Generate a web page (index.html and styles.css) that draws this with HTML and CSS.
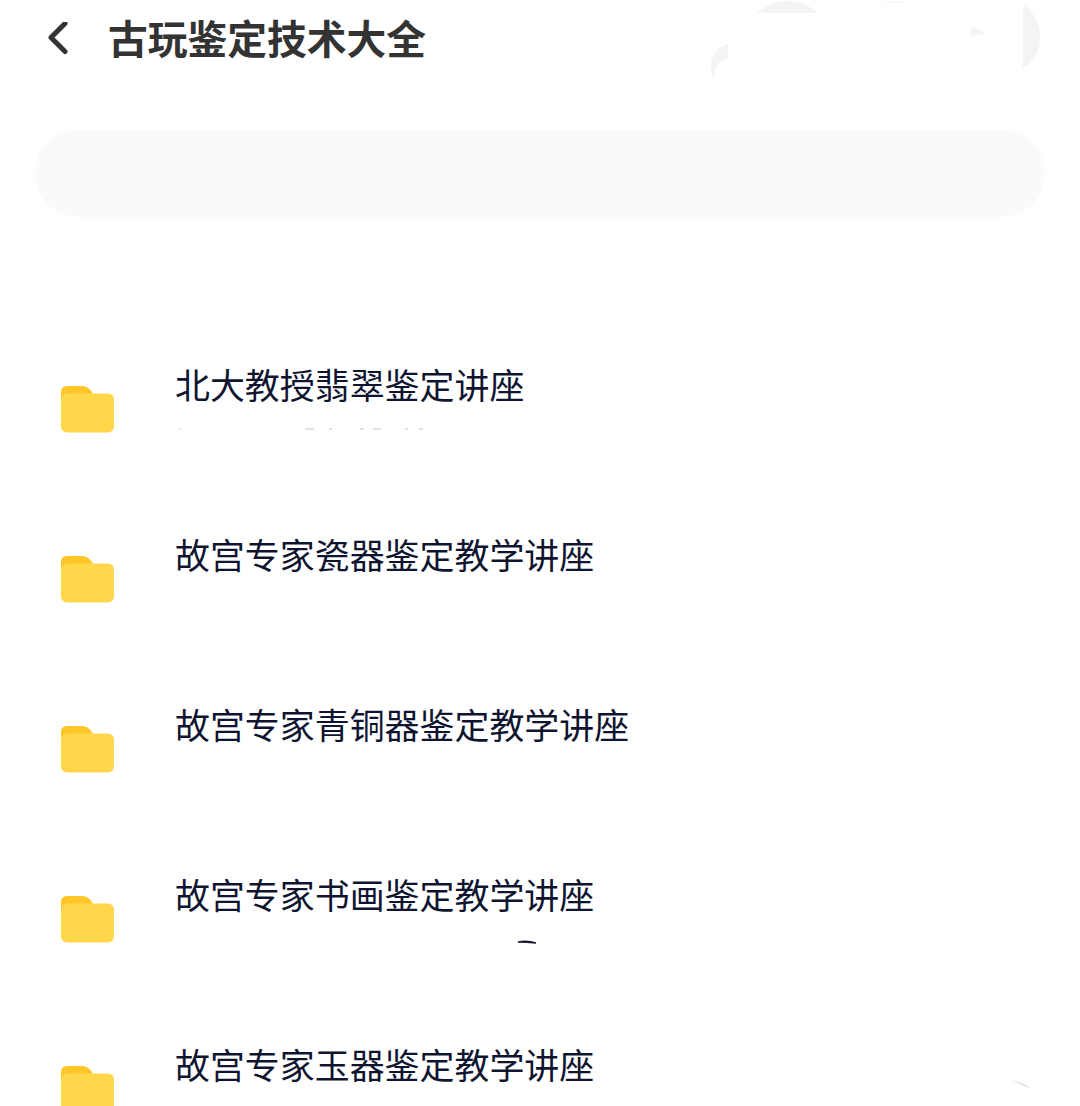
FILE: index.html
```html
<!DOCTYPE html>
<html lang="zh-CN">
<head>
<meta charset="utf-8">
<title>古玩鉴定技术大全</title>
<link rel="stylesheet" href="styles.css">
</head>
<body>
<div class="page">
  <header class="header">
    <svg class="back" width="24" height="36" viewBox="0 0 24 36"><path d="M19 1.5 L5 15.5 L19 29.5" fill="none" stroke="#333" stroke-width="5" stroke-linecap="round" stroke-linejoin="round"/></svg>
    <h1 class="title">古玩鉴定技术大全</h1>
  </header>
  <div class="search"></div>
  <ul class="list">
    <li class="row">
      <svg class="folder" width="54" height="47" viewBox="0 0 54 47"><use href="#f"/></svg>
      <span class="name">北大教授翡翠鉴定讲座</span>
    </li>
    <li class="row">
      <svg class="folder" width="54" height="47" viewBox="0 0 54 47"><use href="#f"/></svg>
      <span class="name">故宫专家瓷器鉴定教学讲座</span>
    </li>
    <li class="row">
      <svg class="folder" width="54" height="47" viewBox="0 0 54 47"><use href="#f"/></svg>
      <span class="name">故宫专家青铜器鉴定教学讲座</span>
    </li>
    <li class="row">
      <svg class="folder" width="54" height="47" viewBox="0 0 54 47"><use href="#f"/></svg>
      <span class="name">故宫专家书画鉴定教学讲座</span>
    </li>
    <li class="row">
      <svg class="folder" width="54" height="47" viewBox="0 0 54 47"><use href="#f"/></svg>
      <span class="name">故宫专家玉器鉴定教学讲座</span>
    </li>
  </ul>
  <svg class="marks" width="1080" height="1106" viewBox="0 0 1080 1106" aria-hidden="true">
    <defs>
      <g id="f">
        <path d="M0 20 V6 Q0 0 6 0 H21 Q28 0 32 8 H10 Z" fill="#ffc627"/>
        <rect x="0" y="7.5" width="53" height="39" rx="6" fill="#ffd74a"/>
      </g>
    </defs>
    <path d="M757 13 Q770 1 787 1 Q805 1 818 13 Z" fill="#f4f4f5"/>
    <path d="M880 3 Q895 0 910 3 Z" fill="#f6f6f7"/>
    <path d="M1023 5 Q1040 16 1040 37 Q1040 58 1023 68 Z" fill="#f4f4f5"/>
    <path d="M971 26 L985 33 L971 36 Z" fill="#f4f4f5"/>
    <path d="M728 44 Q711 48 711 66 Q711 74 714 80 Q713 62 728 58 Z" fill="#f4f4f5"/>
    <path d="M518 942 Q527 940 536 943 Q527 942 518 942 Z" stroke="#1a1a35" stroke-width="1.5" fill="#1a1a35"/>
    <path d="M1013 1081 Q1024 1082 1031 1089 Q1022 1085 1013 1081 Z" fill="#dcdce2"/>
    <path d="M305 429 H314 M329 429 H332 M360 429 H364 M373 429 H381 M405 429 H408 M419 429 H423" stroke="#d8d8e0" stroke-width="1.5"/>
    <path d="M178 429 L182 429" stroke="#e5e5ea" stroke-width="1"/>
  </svg>
</div>
</body>
</html>
```

FILE: styles.css
```css
* { box-sizing: border-box; }
html, body { margin: 0; padding: 0; background: #fff; }
.page {
  position: relative;
  width: 1080px;
  height: 1106px;
  overflow: hidden;
  font-family: "Noto Sans CJK SC", "Noto Sans", sans-serif;
}
.header {
  display: flex;
  align-items: center;
  height: 80px;
  padding-left: 46px;
  gap: 38px;
}
.back { display: block; flex: none; }
.title {
  margin: 0 0 6px;
  font-size: 39.75px;
  line-height: 74px;
  font-weight: 700;
  color: #333;
}
.search {
  margin: 50px 35px 0;
  height: 87px;
  border-radius: 44px;
  background: #fafafc;
}
.list {
  list-style: none;
  margin: 0;
  padding: 129px 0 0 61px;
}
.row {
  display: flex;
  align-items: flex-start;
  gap: 60px;
  height: 170px;
}
.folder { display: block; flex: none; margin-top: 40px; }
.name {
  margin-top: 18px;
  font-size: 34.95px;
  line-height: 40px;
  color: #0f1430;
}
.marks {
  position: absolute;
  left: 0;
  top: 0;
  pointer-events: none;
}
```
